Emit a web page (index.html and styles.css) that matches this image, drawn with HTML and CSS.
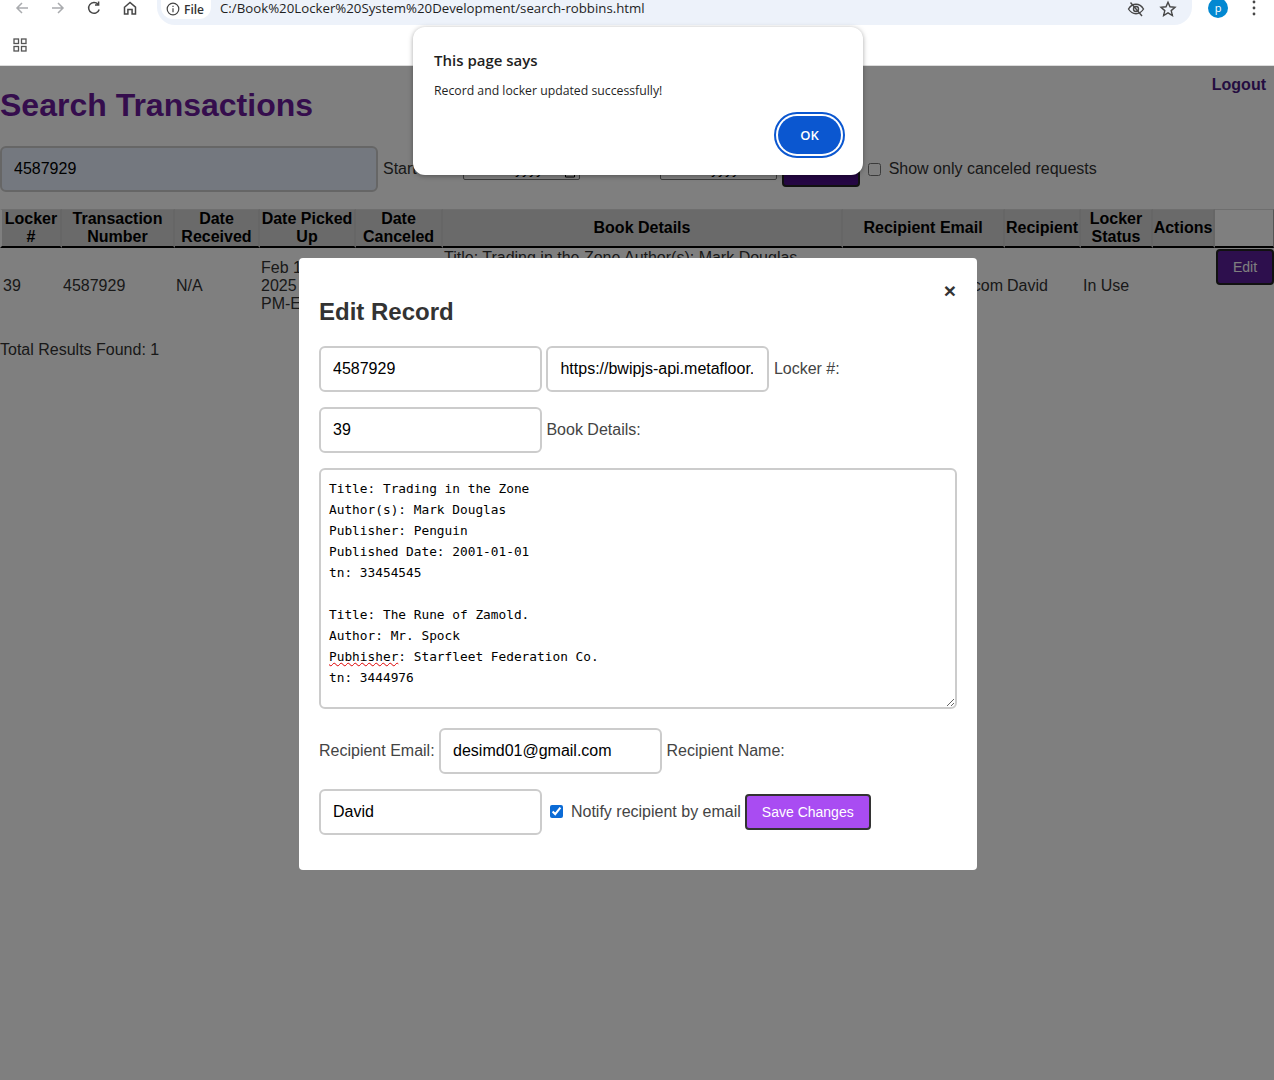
FILE: index.html
```html
<!DOCTYPE html>
<html lang="en">
<head>
    <meta charset="UTF-8">
    <title>Search Transactions</title>
    <link rel="stylesheet" href="styles.css">
</head>
<body>
    <!-- browser toolbar -->
    <header class="chrome">
        <div class="toolbar">
            <svg class="tool-icon faded" viewBox="0 0 16 16"><path d="M14 8H3M8 3L3 8l5 5"/></svg>
            <svg class="tool-icon faded" viewBox="0 0 16 16"><path d="M2 8h11M8 3l5 5-5 5"/></svg>
            <svg class="tool-icon" viewBox="0 0 16 16"><path d="M13.2 9.5A5.4 5.4 0 1 1 12 4.2M12.6 1.5v3.6H9"/></svg>
            <svg class="tool-icon" viewBox="0 0 16 16"><path d="M2.5 7.2L8 2.5l5.5 4.7V14h-3.4V9.5H5.900V14H2.500z"/></svg>
            <div class="omnibox">
                <span class="file-chip">
                    <svg class="info-icon" viewBox="0 0 14 14"><circle cx="7" cy="7" r="5.8"/><path d="M7 6.200v4M7 3.700v1.200"/></svg>
                    File
                </span>
                <span class="url">C:/Book%20Locker%20System%20Development/search-robbins.html</span>
                <svg class="omni-icon eye" viewBox="0 0 18 18"><path d="M1.500 9C3.500 5.800 6 4.300 9 4.300S14.500 5.800 16.500 9c-2 3.200-4.500 4.700-7.500 4.700S3.500 12.200 1.500 9z"/><circle cx="9" cy="9" r="2.500"/><path d="M3.500 2.500l11.500 13.500"/></svg>
                <svg class="omni-icon" viewBox="0 0 18 18"><path d="M9 2.200l2 4.600 5 .5-3.800 3.300 1.200 4.900L9 12.900l-4.400 2.600 1.200-4.900L2 7.300l5-.5z"/></svg>
            </div>
            <span class="avatar">p</span>
            <svg class="menu-dots" viewBox="0 0 4 16"><circle cx="2" cy="2" r="1.400"/><circle cx="2" cy="8" r="1.400"/><circle cx="2" cy="14" r="1.400"/></svg>
        </div>
        <div class="bookmarks">
            <svg class="apps-icon" viewBox="0 0 14 14"><rect x="1" y="1" width="4.500" height="4.500"/><rect x="8.500" y="1" width="4.500" height="4.500"/><rect x="1" y="8.500" width="4.500" height="4.500"/><rect x="8.500" y="8.500" width="4.500" height="4.500"/></svg>
        </div>
    </header>

    <main class="page">
        <a class="logout">Logout</a>
        <h1>Search Transactions</h1>

        <form class="search-form">
            <input class="search-input" type="text" value="4587929">
            <label>Start Date:</label>
            <span class="date-box start-date">mm/dd/yyyy<svg class="cal-icon" viewBox="0 0 12 12"><path d="M1.500 2.500h9v8.500h-9zM1.500 5h9"/></svg></span>
            <label class="end-label">End Date:</label>
            <span class="date-box">mm/dd/yyyy</span>
            <button class="search-btn" type="button">Search</button>
            <input class="cancel-check" type="checkbox">
            <label>Show only canceled requests</label>
        </form>

        <table class="results">
            <thead>
                <tr>
                    <th class="c-locker">Locker #</th>
                    <th class="c-trans">Transaction Number</th>
                    <th class="c-recv">Date Received</th>
                    <th class="c-pick">Date Picked Up</th>
                    <th class="c-canc">Date Canceled</th>
                    <th class="c-book">Book Details</th>
                    <th class="c-email">Recipient Email</th>
                    <th class="c-name">Recipient</th>
                    <th class="c-status">Locker Status</th>
                    <th class="c-act">Actions</th>
                    <th class="c-edit"></th>
                </tr>
            </thead>
            <tbody>
                <tr>
                    <td>39</td>
                    <td class="tight">4587929</td>
                    <td class="tight">N/A</td>
                    <td class="tight">Feb 10, 2025 1:15 PM-EST</td>
                    <td></td>
                    <td class="tight book-cell">Title: Trading in the Zone Author(s): Mark Douglas Publisher: Penguin Published Date: 2001-01-01 tn: 33454545 Title: The Rune of Zamold. Author: Mr. Spock Pubhisher: Starfleet Co. tn: 3444976</td>
                    <td class="email-cell">desimd01@gmail.com</td>
                    <td>David</td>
                    <td>In Use</td>
                    <td></td>
                    <td class="edit-cell"><button class="edit-btn" type="button">Edit</button></td>
                </tr>
            </tbody>
        </table>

        <p class="total">Total Results Found: 1</p>

        <div class="overlay"></div>

        <section class="modal">
            <span class="close">&times;</span>
            <h2>Edit Record</h2>
            <div class="form-row">
                <input type="text" value="4587929">
                <input class="url-input" type="text" value="https://bwipjs-api.metafloor.com/?bcid=code128">
                <label>Locker #:</label>
            </div>
            <div class="form-row">
                <input type="text" value="39">
                <label>Book Details:</label>
            </div>
            <div class="details">Title: Trading in the Zone
Author(s): Mark Douglas
Publisher: Penguin
Published Date: 2001-01-01
tn: 33454545

Title: The Rune of Zamold.
Author: Mr. Spock
<span class="misspelled">Pubhisher</span>: Starfleet Federation Co.
tn: 3444976</div>
            <div class="form-row">
                <label>Recipient Email:</label>
                <input type="text" value="desimd01@gmail.com">
                <label>Recipient Name:</label>
            </div>
            <div class="form-row">
                <input type="text" value="David">
                <input class="notify-check" type="checkbox" checked>
                <label>Notify recipient by email</label>
                <button class="save-btn" type="button">Save Changes</button>
            </div>
        </section>
    </main>

    <!-- native alert -->
    <div class="alert">
        <div class="alert-title">This page says</div>
        <div class="alert-msg">Record and locker updated successfully!</div>
        <div class="alert-actions"><button class="ok-btn" type="button">OK</button></div>
    </div>
</body>
</html>
```

FILE: styles.css
```css
* {
    box-sizing: border-box;
}
html, body {
    margin: 0;
    height: 1080px;
    overflow: hidden;
}
body {
    font-family: "Liberation Sans", Arial, sans-serif;
    font-size: 16px;
    background: #fff;
}

/* browser toolbar */
.chrome {
    height: 66px;
    background: #fff;
    border-bottom: 1px solid #dcdcdc;
    font-family: "Open Sans", "Noto Sans", sans-serif;
}
.toolbar {
    height: 25px;
    display: flex;
    align-items: flex-start;
    padding-left: 14px;
}
.tool-icon {
    width: 16px;
    height: 16px;
    margin-right: 20px;
    flex: none;
    fill: none;
    stroke: #474747;
    stroke-width: 1.500;
}
.tool-icon.faded {
    stroke: #a9abae;
}
.omnibox {
    width: 1035px;
    height: 25px;
    margin-left: -1px;
    margin-right: 16px;
    display: flex;
    align-items: flex-start;
    background: #edf2fa;
    border-radius: 0 0 18px 18px;
    padding-left: 4px;
}
.file-chip {
    width: 50px;
    height: 20px;
    display: flex;
    align-items: center;
    gap: 4px;
    padding-left: 5px;
    margin-top: -1px;
    background: #fff;
    border-radius: 0 0 12px 12px;
    font-size: 12px;
    font-weight: 600;
    color: #333;
}
.info-icon {
    width: 14px;
    height: 14px;
    fill: none;
    stroke: #444;
    stroke-width: 1.200;
}
.url {
    margin-left: 9px;
    margin-top: -1px;
    font-size: 13.250px;
    line-height: 18px;
    color: #1f1f1f;
    flex: 1;
}
.omni-icon {
    width: 18px;
    height: 18px;
    flex: none;
    margin-right: 15px;
    fill: none;
    stroke: #474747;
    stroke-width: 1.400;
}
.omni-icon.eye {
    margin-right: 14px;
}
.avatar {
    width: 20px;
    height: 20px;
    margin-top: -2px;
    flex: none;
    border-radius: 50%;
    background: #0288d1;
    color: #fff;
    font-size: 11px;
    line-height: 19px;
    text-align: center;
}
.menu-dots {
    width: 4px;
    height: 16px;
    margin-left: 24px;
    flex: none;
    fill: #474747;
}
.bookmarks {
    height: 40px;
    padding: 13px 0 0 13px;
}
.apps-icon {
    display: block;
    width: 14px;
    height: 14px;
    fill: none;
    stroke: #555;
    stroke-width: 1.300;
}

/* page under the dim layer */
.page {
    position: relative;
    height: 1014px;
    overflow: hidden;
    background: #fff;
    color: #333;
}
.logout {
    position: absolute;
    top: 10px;
    right: 8px;
    font-weight: bold;
    color: #4b1a82;
}
h1 {
    margin: 0;
    padding-top: 21px;
    font-size: 32px;
    line-height: 37px;
    color: #6a1b9a;
}
.search-form {
    display: flex;
    align-items: center;
    margin-top: 22px;
    height: 46px;
    white-space: nowrap;
}
.search-form label {
    color: #333;
}
.search-form input[type="text"],
.form-row input[type="text"] {
    height: 46px;
    padding: 0 12px;
    font: 16px "Liberation Sans", Arial, sans-serif;
    color: #000;
    background: #fff;
    border: 2px solid #ccc;
    border-radius: 6px;
    flex: none;
}
.search-form .search-input[type="text"] {
    width: 378px;
    background: #e8f0fe;
    margin-right: 5px;
}
.date-box {
    width: 117px;
    height: 22px;
    margin-left: 4px;
    padding-left: 4px;
    display: flex;
    align-items: center;
    border: 1px solid #767676;
    border-radius: 2px;
    font-size: 14px;
    line-height: 20px;
    color: #000;
}
.cal-icon {
    width: 12px;
    height: 12px;
    margin: 5px 3px 0 auto;
    fill: none;
    stroke: #000;
}
.end-label {
    margin-left: 4px;
}
.end-label + .date-box {
    margin-left: 4px;
}
.search-btn {
    width: 78px;
    height: 40px;
    margin: 0 0 4px 5px;
    background: #4b0f87;
    color: #fff;
    border: 2px solid #222;
    border-radius: 4px;
}
.cancel-check {
    width: 13px;
    height: 13px;
    margin: 0 8px 0 8px;
}

.results {
    margin-top: 17px;
    width: 1274px;
    table-layout: fixed;
    border-collapse: separate;
    border-spacing: 0;
}
.results th {
    height: 39px;
    padding: 0;
    background: #d4d4d4;
    color: #000;
    line-height: 18px;
    border-bottom: 2px solid #000;
    border-right: 2px solid #ccc;
    border-top: 1px solid #ddd;
}
.results th:first-child {
    border-left: 2px solid #fff;
}
.results .c-edit {
    background: #fff;
    border-right: 1px solid #aaa;
}
.c-locker { width: 62px; }
.c-trans { width: 113px; }
.c-recv { width: 85px; }
.c-pick { width: 96px; }
.c-canc { width: 87px; }
.c-book { width: 400px; }
.c-email { width: 162px; }
.c-name { width: 76px; }
.c-status { width: 72px; }
.c-act { width: 62px; }
.results td {
    padding: 2px 2px 0;
    line-height: 18px;
    vertical-align: middle;
    color: #333;
}
.results td:first-child {
    padding-left: 3px;
}
.results .tight {
    padding-left: 1px;
}
.results .book-cell {
    padding-top: 1px;
    padding-bottom: 1px;
}
.email-cell {
    text-align: right;
    white-space: nowrap;
    direction: rtl;
}
.results .edit-cell {
    padding: 1px 0 0 1px;
    vertical-align: top;
}
.edit-btn {
    width: 58px;
    height: 36px;
    background: #5a1f9a;
    color: #fff;
    border: 2px solid #222;
    border-radius: 4px;
    font: 14px "Liberation Sans", Arial, sans-serif;
}
.total {
    margin: 19px 0 0;
    line-height: 18px;
    color: #333;
}
.overlay {
    position: absolute;
    inset: 0;
    background: rgba(0, 0, 0, 0.5);
}

/* edit modal */
.modal {
    position: absolute;
    left: 299px;
    top: 192px;
    width: 678px;
    height: 612px;
    padding: 20px;
    background: #fff;
    border-radius: 4px;
}
.close {
    position: absolute;
    top: 20px;
    right: 21px;
    font-size: 21px;
    line-height: 26px;
    font-weight: bold;
    color: #333;
}
h2 {
    margin: 20px 0 0;
    font-size: 24px;
    line-height: 28px;
    color: #333;
}
.form-row {
    display: flex;
    align-items: center;
    gap: 4.450px;
    margin-top: 15px;
    height: 46px;
    white-space: nowrap;
}
h2 + .form-row {
    margin-top: 20px;
}
.form-row input[type="text"] {
    width: 223px;
}
.form-row label {
    color: #444;
}
.form-row .url-input[type="text"] {
    padding-right: 14px;
}
.details {
    width: 638px;
    height: 241px;
    margin: 15px 0 19px;
    padding: 8px 8px;
    border: 2px solid #ccc;
    border-radius: 6px;
    font: 12.800px/21px "DejaVu Sans Mono", monospace;
    color: #000;
    white-space: pre-wrap;
    overflow: auto;
    resize: vertical;
}
.details + .form-row {
    margin-top: 0;
}
.misspelled {
    text-decoration: underline wavy #d00;
    text-decoration-thickness: 1px;
}
.notify-check {
    width: 13px;
    height: 13px;
    margin: 0 3.550px 2px 3.550px;
    accent-color: #0b6bd6;
}
.save-btn {
    width: 126px;
    height: 36px;
    margin-left: -0.500px;
    background: #a94cf2;
    color: #fff;
    border: 2px solid #333;
    border-radius: 4px;
    font: 14px "Liberation Sans", Arial, sans-serif;
}

/* native alert */
.alert {
    position: absolute;
    left: 413px;
    top: 27px;
    width: 450px;
    height: 148px;
    padding: 23px 21px 0;
    background: #fff;
    border-radius: 12px;
    box-shadow: 0 1px 5px rgba(0, 0, 0, 0.35);
    font-family: "Open Sans", "Noto Sans", sans-serif;
    color: #1f1f1f;
}
.alert-title {
    font-size: 15px;
    line-height: 20px;
    font-weight: 600;
}
.alert-msg {
    margin-top: 12px;
    font-size: 12.250px;
    line-height: 18px;
}
.alert-actions {
    display: flex;
    justify-content: flex-end;
    margin: 16px 1px 0 0;
}
.ok-btn {
    width: 63px;
    height: 38px;
    background: #0b57d0;
    color: #fff;
    border: none;
    border-radius: 19px;
    outline: 2px solid #0b57d0;
    outline-offset: 2px;
    font: 600 13px "Open Sans", sans-serif;
}
```
